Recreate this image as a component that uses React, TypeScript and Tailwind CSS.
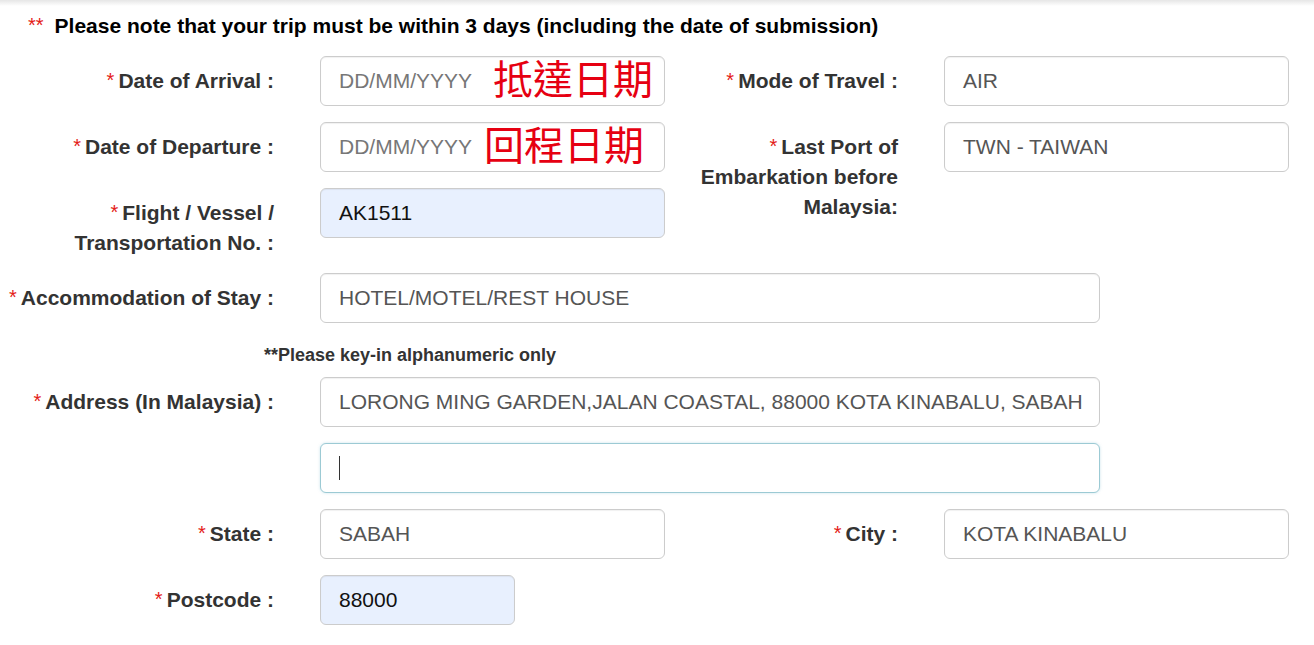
import React from 'react';

const font = { fontFamily: '"Liberation Sans", Arial, sans-serif' };
const cjk = { fontFamily: '"Noto Sans CJK TC", "Noto Sans CJK SC", sans-serif' };

function Star() {
  return <span className="mr-[4px] align-top text-[20px] font-normal leading-[28px] text-[#e41b17]">*</span>;
}

function Label({ children, width }: { children: React.ReactNode; width: string }) {
  return (
    <div className={`${width} shrink-0 pt-[10px] text-right text-[21px] font-bold leading-[30px] text-[#333]`}>
      {children}
    </div>
  );
}

function Field({
  value,
  width = 'w-[345px]',
  filled = false,
  placeholder = false,
  focused = false,
}: {
  value?: string;
  width?: string;
  filled?: boolean;
  placeholder?: boolean;
  focused?: boolean;
}) {
  const border = focused
    ? 'border-[#9ccad4] shadow-[0_0_3px_rgba(102,175,200,0.35)]'
    : 'border-[#ccc] shadow-[inset_0_1px_1px_rgba(0,0,0,0.06)]';
  const bg = filled ? 'bg-[#e8f0fe]' : 'bg-white';
  const color = filled ? 'text-[#111]' : placeholder ? 'text-[#777]' : 'text-[#555]';
  return (
    <div
      className={`${width} ml-[46px] flex h-[50px] shrink-0 items-center overflow-hidden whitespace-nowrap rounded-[6px] border px-[18px] text-[21px] ${border} ${bg} ${color}`}
    >
      {focused ? <span className="h-[24px] w-px bg-[#333]" /> : value}
    </div>
  );
}

export default function App() {
  return (
    <div className="relative min-h-[645px] w-[1314px] bg-white" style={font}>
      <div className="h-[6px] bg-gradient-to-b from-[#e6e6e6] to-white" />
      <p className="mt-[8px] pl-[28px] text-[21px] font-bold leading-[24px] text-black">
        <span className="mr-[11px] align-top text-[20px] font-normal leading-[22px] text-[#e41b17]">**</span>
        Please note that your trip must be within 3 days (including the date of submission)
      </p>

      <div className="mt-[18px] flex">
        <div className="flex flex-col gap-[16px]">
          <div className="relative flex">
            <Label width="w-[274px]">
              <Star />
              Date of Arrival :
            </Label>
            <Field value="DD/MM/YYYY" placeholder />
            <span className="absolute left-[493px] top-[-5px] text-[40px] leading-[52px] text-[#e60012]" style={cjk}>
              抵達日期
            </span>
          </div>
          <div className="relative flex">
            <Label width="w-[274px]">
              <Star />
              Date of Departure :
            </Label>
            <Field value="DD/MM/YYYY" placeholder />
            <span className="absolute left-[484px] top-[-5px] text-[40px] leading-[52px] text-[#e60012]" style={cjk}>
              回程日期
            </span>
          </div>
          <div className="flex">
            <Label width="w-[274px]">
              <Star />
              Flight / Vessel /
              <br />
              Transportation No. :
            </Label>
            <Field value="AK1511" filled />
          </div>
        </div>

        <div className="flex flex-col gap-[16px]">
          <div className="flex">
            <Label width="w-[233px]">
              <Star />
              Mode of Travel :
            </Label>
            <Field value="AIR" />
          </div>
          <div className="flex">
            <Label width="w-[233px]">
              <Star />
              Last Port of
              <br />
              Embarkation before
              <br />
              Malaysia:
            </Label>
            <Field value="TWN - TAIWAN" />
          </div>
        </div>
      </div>

      <div className="mt-[15px] flex">
        <Label width="w-[274px]">
          <Star />
          Accommodation of Stay :
        </Label>
        <Field value="HOTEL/MOTEL/REST HOUSE" width="w-[780px]" />
      </div>

      <p className="mt-[21px] pl-[264px] text-[18px] font-bold leading-[22px] text-[#333]">
        **Please key-in alphanumeric only
      </p>

      <div className="mt-[11px] flex flex-col gap-[16px]">
        <div className="flex">
          <Label width="w-[274px]">
            <Star />
            Address (In Malaysia) :
          </Label>
          <Field value="LORONG MING GARDEN,JALAN COASTAL, 88000 KOTA KINABALU, SABAH" width="w-[780px]" />
        </div>
        <div className="flex">
          <div className="w-[274px] shrink-0" />
          <Field width="w-[780px]" focused />
        </div>
        <div className="flex">
          <Label width="w-[274px]">
            <Star />
            State :
          </Label>
          <Field value="SABAH" />
          <Label width="w-[233px]">
            <Star />
            City :
          </Label>
          <Field value="KOTA KINABALU" />
        </div>
        <div className="flex">
          <Label width="w-[274px]">
            <Star />
            Postcode :
          </Label>
          <Field value="88000" width="w-[195px]" filled />
        </div>
      </div>
    </div>
  );
}
